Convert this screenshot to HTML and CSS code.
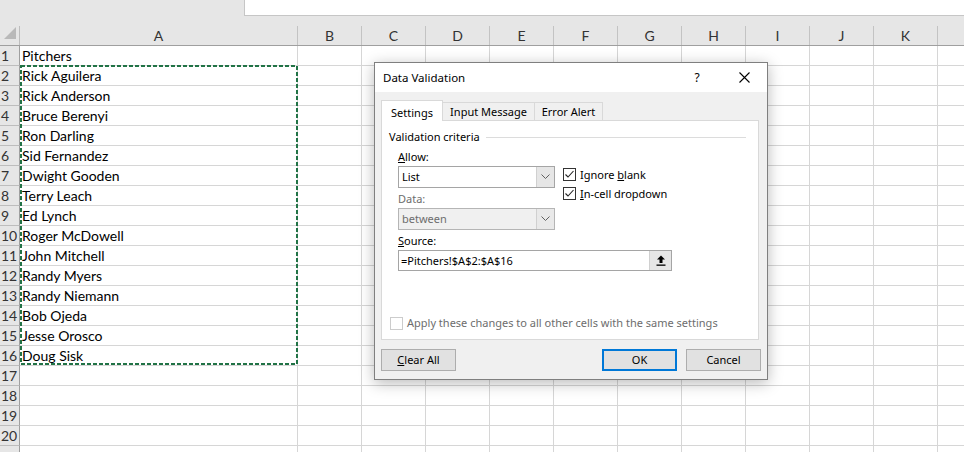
FILE: index.html
```html
<!DOCTYPE html>
<html>
<head>
<meta charset="utf-8">
<title>Data Validation</title>
<link rel="stylesheet" href="styles.css">
</head>
<body>
<div class="sheet">
  <div class="topbar">
    <div class="namebox-area"></div>
    <div class="formula"></div>
  </div>
  <div class="hdr">
    <div class="corner"><svg width="20" height="20" viewBox="0 0 20 20"><polygon points="16,1 16,13 4,13" fill="#b9b9b9"/></svg></div>
    <div class="colh">A</div>
    <div class="colh">B</div>
    <div class="colh">C</div>
    <div class="colh">D</div>
    <div class="colh">E</div>
    <div class="colh">F</div>
    <div class="colh">G</div>
    <div class="colh">H</div>
    <div class="colh">I</div>
    <div class="colh">J</div>
    <div class="colh">K</div>
    <div class="colh"></div>
  </div>
  <div class="row"><div class="rh">1</div><div class="cell">Pitchers</div><div class="rest"></div></div>
  <div class="row"><div class="rh">2</div><div class="cell">Rick Aguilera</div><div class="rest"></div></div>
  <div class="row"><div class="rh">3</div><div class="cell">Rick Anderson</div><div class="rest"></div></div>
  <div class="row"><div class="rh">4</div><div class="cell">Bruce Berenyi</div><div class="rest"></div></div>
  <div class="row"><div class="rh">5</div><div class="cell">Ron Darling</div><div class="rest"></div></div>
  <div class="row"><div class="rh">6</div><div class="cell">Sid Fernandez</div><div class="rest"></div></div>
  <div class="row"><div class="rh">7</div><div class="cell">Dwight Gooden</div><div class="rest"></div></div>
  <div class="row"><div class="rh">8</div><div class="cell">Terry Leach</div><div class="rest"></div></div>
  <div class="row"><div class="rh">9</div><div class="cell">Ed Lynch</div><div class="rest"></div></div>
  <div class="row"><div class="rh">10</div><div class="cell">Roger McDowell</div><div class="rest"></div></div>
  <div class="row"><div class="rh">11</div><div class="cell">John Mitchell</div><div class="rest"></div></div>
  <div class="row"><div class="rh">12</div><div class="cell">Randy Myers</div><div class="rest"></div></div>
  <div class="row"><div class="rh">13</div><div class="cell">Randy Niemann</div><div class="rest"></div></div>
  <div class="row"><div class="rh">14</div><div class="cell">Bob Ojeda</div><div class="rest"></div></div>
  <div class="row"><div class="rh">15</div><div class="cell">Jesse Orosco</div><div class="rest"></div></div>
  <div class="row"><div class="rh">16</div><div class="cell">Doug Sisk</div><div class="rest"></div></div>
  <div class="row"><div class="rh">17</div><div class="cell"></div><div class="rest"></div></div>
  <div class="row"><div class="rh">18</div><div class="cell"></div><div class="rest"></div></div>
  <div class="row"><div class="rh">19</div><div class="cell"></div><div class="rest"></div></div>
  <div class="row"><div class="rh">20</div><div class="cell"></div><div class="rest"></div></div>
  <div class="row"><div class="rh"></div><div class="cell"></div><div class="rest"></div></div>

  <svg class="marquee" width="280" height="302" viewBox="0 0 280 302">
    <rect x="1" y="1" width="276" height="298" fill="none" stroke="#217346" stroke-width="2" stroke-dasharray="4 2"/>
  </svg>

  <div class="dialog">
    <div class="titlebar">
      <span class="title">Data Validation</span>
      <span class="cap-btn help">?</span>
      <span class="cap-btn close"><svg width="11" height="11" viewBox="0 0 11 11"><path d="M0.5 0.5 L10.5 10.5 M10.5 0.5 L0.5 10.5" stroke="#000" stroke-width="1.1"/></svg></span>
    </div>
    <div class="dbody">
      <div class="tabs">
        <div class="tab active">Settings</div>
        <div class="tab">Input Message</div>
        <div class="tab last">Error Alert</div>
      </div>
      <div class="panel">
        <div class="group-title"><span>Validation criteria</span><span class="rule"></span></div>
        <div class="criteria">
          <div class="fields">
            <div class="lbl"><u>A</u>llow:</div>
            <div class="combo">
              <span class="combo-text">List</span>
              <span class="combo-btn"><svg width="9" height="6" viewBox="0 0 9 6"><polyline points="0.5,0.5 4.5,4.5 8.5,0.5" fill="none" stroke="#606060" stroke-width="1"/></svg></span>
            </div>
            <div class="lbl disabled lbl-data">Data:</div>
            <div class="combo disabled">
              <span class="combo-text">between</span>
              <span class="combo-btn"><svg width="9" height="6" viewBox="0 0 9 6"><polyline points="0.5,0.5 4.5,4.5 8.5,0.5" fill="none" stroke="#606060" stroke-width="1"/></svg></span>
            </div>
          </div>
          <div class="checks">
            <div class="check-row"><span class="box"><svg width="11" height="11" viewBox="0 0 11 11"><polyline points="1.5,5.5 4,8 9.5,2" fill="none" stroke="#222" stroke-width="1.1"/></svg></span><span>Ignore <u>b</u>lank</span></div>
            <div class="check-row"><span class="box"><svg width="11" height="11" viewBox="0 0 11 11"><polyline points="1.5,5.5 4,8 9.5,2" fill="none" stroke="#222" stroke-width="1.1"/></svg></span><span><u>I</u>n-cell dropdown</span></div>
          </div>
        </div>
        <div class="lbl lbl-source"><u>S</u>ource:</div>
        <div class="source">
          <span class="source-text">=Pitchers!$A$2:$A$16</span>
          <span class="source-btn"><svg width="10" height="11" viewBox="0 0 10 11"><path d="M5 0.5 L1 4.5 H3.5 V8 H6.5 V4.5 H9 Z" fill="#000"/><rect x="0.5" y="9.5" width="9" height="1.3" fill="#000"/></svg></span>
        </div>
        <div class="apply">
          <span class="box disabled"></span>
          <span>Apply these changes to all other cells with the same settings</span>
        </div>
      </div>
      <div class="buttons">
        <div class="btn"><u>C</u>lear All</div>
        <div class="spacer"></div>
        <div class="btn default">OK</div>
        <div class="btn">Cancel</div>
      </div>
    </div>
  </div>
</div>
</body>
</html>
```

FILE: styles.css
```css
html, body {
  margin: 0;
  padding: 0;
  background: #ffffff;
  overflow: hidden;
}

.sheet {
  position: relative;
  width: 964px;
  height: 452px;
  overflow: hidden;
  font-family: Lato, "Liberation Sans", sans-serif;
  font-size: 14px;
  color: #000;
}

.topbar {
  display: flex;
  height: 26px;
  background: #e6e6e6;
}

.namebox-area {
  width: 244px;
}

.formula {
  flex: 1;
  height: 16px;
  box-sizing: border-box;
  background: #ffffff;
  border-left: 1px solid #c6c6c6;
  border-bottom: 1px solid #c6c6c6;
}

.hdr {
  display: grid;
  grid-template-columns: 20px 278px repeat(11, 64px);
  height: 20px;
  box-sizing: border-box;
  background: #e6e6e6;
  border-bottom: 1px solid #9f9f9f;
}

.corner {
  border-right: 1px solid #bdbdbd;
  overflow: hidden;
}

.corner svg {
  display: block;
}

.colh {
  border-right: 1px solid #c3c3c3;
  text-align: center;
  line-height: 19px;
  color: #333;
}

.row {
  display: grid;
  grid-template-columns: 20px 278px 1fr;
  height: 20px;
}

.rh {
  box-sizing: border-box;
  background: #e6e6e6;
  border-right: 1px solid #9f9f9f;
  border-bottom: 1px solid #bdbdbd;
  line-height: 19px;
  padding-left: 1px;
  color: #333;
  overflow: hidden;
  white-space: nowrap;
}

.cell {
  box-sizing: border-box;
  border-right: 1px solid #d6d6d6;
  border-bottom: 1px solid #d6d6d6;
  line-height: 19px;
  padding-left: 2px;
  white-space: nowrap;
}

.rest {
  box-sizing: border-box;
  border-bottom: 1px solid #d6d6d6;
  background-image: repeating-linear-gradient(90deg, transparent 0 63px, #d6d6d6 63px 64px);
}

.marquee {
  position: absolute;
  left: 20px;
  top: 65px;
}

/* ---------- dialog ---------- */

.dialog {
  position: absolute;
  left: 374px;
  top: 62px;
  width: 394px;
  height: 318px;
  box-sizing: border-box;
  border: 1px solid #7f7f7f;
  background: #f0f0f0;
  box-shadow: 0 3px 14px rgba(0, 0, 0, 0.28);
  font-family: "Noto Sans", "Open Sans", sans-serif;
  font-size: 11px;
  color: #000;
  display: flex;
  flex-direction: column;
}

.titlebar {
  height: 29px;
  background: #ffffff;
  display: flex;
  align-items: center;
}

.title {
  padding-left: 8px;
  flex: 1;
  font-size: 11.5px;
}

.cap-btn {
  width: 46px;
  height: 29px;
  display: flex;
  align-items: center;
  justify-content: center;
}

.help {
  font-size: 12px;
  padding-right: 2px;
  box-sizing: border-box;
}

.close svg {
  display: block;
}

.dbody {
  flex: 1;
  padding: 8px 6px 8px 6px;
  display: flex;
  flex-direction: column;
}

.tabs {
  display: flex;
  align-items: flex-end;
  height: 21px;
  margin-bottom: -1px;
  position: relative;
  z-index: 1;
}

.tab {
  box-sizing: border-box;
  height: 18px;
  margin-bottom: 1px;
  border: 1px solid #d9d9d9;
  border-left: none;
  border-bottom: none;
  background: #f0f0f0;
  display: flex;
  align-items: center;
  justify-content: center;
  padding-top: 1px;
  line-height: 16px;
  width: 92px;
}

.tab.active {
  height: 21px;
  margin-bottom: 0;
  width: 62px;
  border-left: 1px solid #d9d9d9;
  background: #ffffff;
  padding-top: 3px;
}

.tab.last {
  width: 68px;
}

.panel {
  height: 220px;
  box-sizing: border-box;
  margin-right: 2px;
  border: 1px solid #d9d9d9;
  background: #ffffff;
  padding: 8px 8px 8px 7px;
  display: flex;
  flex-direction: column;
}

.group-title {
  display: flex;
  align-items: center;
  height: 16px;
  line-height: 16px;
}

.rule {
  flex: 1;
  height: 1px;
  background: #dcdcdc;
  margin-left: 6px;
  margin-right: 4px;
}

.criteria {
  display: flex;
  margin-top: 4px;
  margin-left: 9px;
}

.fields {
  width: 157px;
  display: flex;
  flex-direction: column;
}

.lbl {
  height: 16px;
  line-height: 16px;
}

.lbl.disabled {
  color: #6d6d6d;
}

.lbl-data {
  margin-top: 3px;
}

.combo {
  margin-top: 1px;
  height: 22px;
  box-sizing: border-box;
  border: 1px solid #a5a5a5;
  background: #ffffff;
  display: flex;
}

.combo.disabled {
  background: #f0f0f0;
  border-color: #b5b5b5;
  color: #6d6d6d;
}

.combo-text {
  flex: 1;
  line-height: 20px;
  padding-left: 3px;
}

.combo-btn {
  width: 17px;
  background: #e6e6e6;
  border-left: 1px solid #d0d0d0;
  display: flex;
  align-items: center;
  justify-content: center;
}

.combo.disabled .combo-btn {
  background: #e9e9e9;
}

.combo-btn svg {
  display: block;
}

.checks {
  margin-left: 8px;
  margin-top: 16px;
  display: flex;
  flex-direction: column;
}

.check-row {
  height: 19px;
  display: flex;
  align-items: center;
  gap: 4px;
  line-height: 16px;
}

.box {
  width: 13px;
  height: 13px;
  box-sizing: border-box;
  border: 1px solid #333;
  background: #ffffff;
  display: flex;
  align-items: center;
  justify-content: center;
}

.box svg {
  display: block;
}

.box.disabled {
  border-color: #cccccc;
}

.lbl-source {
  margin-top: 3px;
  margin-left: 9px;
}

.source {
  margin-top: 1px;
  margin-left: 9px;
  width: 274px;
  height: 21px;
  box-sizing: border-box;
  border: 1px solid #a5a5a5;
  display: flex;
  background: #ffffff;
}

.source-text {
  flex: 1;
  line-height: 19px;
  padding-left: 2px;
}

.source-btn {
  width: 21px;
  background: #e6e6e6;
  border-left: 1px solid #d0d0d0;
  display: flex;
  align-items: center;
  justify-content: center;
}

.source-btn svg {
  display: block;
}

.apply {
  margin-top: auto;
  display: flex;
  align-items: center;
  gap: 4px;
  height: 16px;
  line-height: 16px;
  color: #6d6d6d;
  padding-left: 1px;
}

.buttons {
  margin-top: 9px;
  display: flex;
  gap: 9px;
}

.spacer {
  flex: 1;
}

.btn {
  width: 75px;
  height: 22px;
  box-sizing: border-box;
  border: 1px solid #adadad;
  background: #e1e1e1;
  display: flex;
  align-items: center;
  justify-content: center;
  line-height: 16px;
}

.btn.default {
  border: 2px solid #0078d7;
}
```
